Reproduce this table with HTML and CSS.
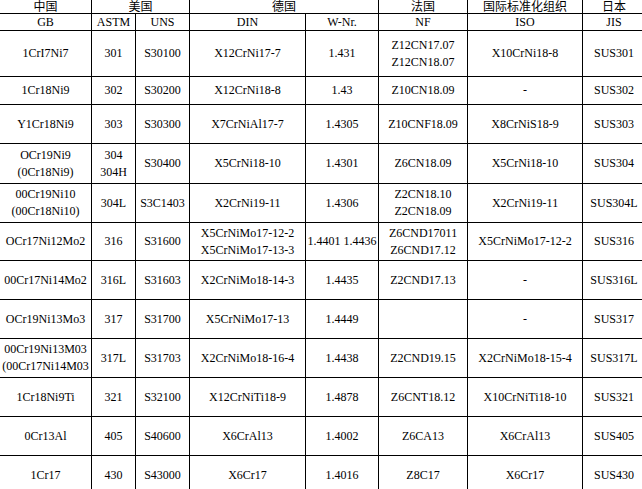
FILE: index.html
```html
<!DOCTYPE html>
<html>
<head>
<meta charset="utf-8">
<link rel="stylesheet" href="styles.css">
</head>
<body>
<div class="wrap">
<table class="grid">
  <colgroup>
    <col class="c-gb"><col class="c-astm"><col class="c-uns"><col class="c-din"><col class="c-wnr"><col class="c-nf"><col class="c-iso"><col class="c-jis">
  </colgroup>
  <tr class="h-country">
    <td class="cn">中国</td>
    <td class="cn" colspan="2">美国</td>
    <td class="cn" colspan="2">德国</td>
    <td class="cn">法国</td>
    <td class="cn">国际标准化组织</td>
    <td class="cn">日本</td>
  </tr>
  <tr class="h-std">
    <td>GB</td><td>ASTM</td><td>UNS</td><td>DIN</td><td>W-Nr.</td><td>NF</td><td>ISO</td><td>JIS</td>
  </tr>
  <tr class="r46">
    <td>1CrI7Ni7</td><td>301</td><td>S30100</td><td>X12CrNi17-7</td><td>1.431</td><td>Z12CN17.07<br>Z12CN18.07</td><td>X10CrNi18-8</td><td>SUS301</td>
  </tr>
  <tr class="r28">
    <td>1Cr18Ni9</td><td>302</td><td>S30200</td><td>X12CrNi18-8</td><td>1.43</td><td>Z10CN18.09</td><td>-</td><td>SUS302</td>
  </tr>
  <tr class="r39">
    <td>Y1Cr18Ni9</td><td>303</td><td>S30300</td><td>X7CrNiAl17-7</td><td>1.4305</td><td>Z10CNF18.09</td><td>X8CrNiS18-9</td><td>SUS303</td>
  </tr>
  <tr class="r40">
    <td>OCr19Ni9<br>(0Cr18Ni9)</td><td>304<br>304H</td><td>S30400</td><td>X5CrNi18-10</td><td>1.4301</td><td>Z6CN18.09</td><td>X5CrNi18-10</td><td>SUS304</td>
  </tr>
  <tr class="r39">
    <td>00Cr19Ni10<br>(00Cr18Ni10)</td><td>304L</td><td>S3C1403</td><td>X2CrNi19-11</td><td>1.4306</td><td>Z2CN18.10<br>Z2CN18.09</td><td>X2CrNi19-11</td><td>SUS304L</td>
  </tr>
  <tr class="r38">
    <td>OCr17Ni12Mo2</td><td>316</td><td>S31600</td><td>X5CrNiMo17-12-2<br>X5CrNiMo17-13-3</td><td>1.4401 1.4436</td><td>Z6CND17011<br>Z6CND17.12</td><td>X5CrNiMo17-12-2</td><td>SUS316</td>
  </tr>
  <tr class="r39">
    <td>00Cr17Ni14Mo2</td><td>316L</td><td>S31603</td><td>X2CrNiMo18-14-3</td><td>1.4435</td><td>Z2CND17.13</td><td>-</td><td>SUS316L</td>
  </tr>
  <tr class="r39">
    <td>OCr19Ni13Mo3</td><td>317</td><td>S31700</td><td>X5CrNiMo17-13</td><td>1.4449</td><td></td><td>-</td><td>SUS317</td>
  </tr>
  <tr class="r39">
    <td><div class="spill">00Cr19Ni13M03<br>(00Cr17Ni14M03</div></td><td>317L</td><td>S31703</td><td>X2CrNiMo18-16-4</td><td>1.4438</td><td>Z2CND19.15</td><td>X2CrNiMo18-15-4</td><td>SUS317L</td>
  </tr>
  <tr class="r39">
    <td>1Cr18Ni9Ti</td><td>321</td><td>S32100</td><td>X12CrNiTi18-9</td><td>1.4878</td><td>Z6CNT18.12</td><td>X10CrNiTi18-10</td><td>SUS321</td>
  </tr>
  <tr class="r39">
    <td>0Cr13Al</td><td>405</td><td>S40600</td><td>X6CrAl13</td><td>1.4002</td><td>Z6CA13</td><td>X6CrAl13</td><td>SUS405</td>
  </tr>
  <tr class="r39">
    <td>1Cr17</td><td>430</td><td>S43000</td><td>X6Cr17</td><td>1.4016</td><td>Z8C17</td><td>X6Cr17</td><td>SUS430</td>
  </tr>
</table>
</div>
</body>
</html>
```

FILE: styles.css
```css
html, body {
  margin: 0;
  padding: 0;
  background: #ffffff;
  overflow: hidden;
}

.wrap {
  width: 642px;
  height: 489px;
  overflow: hidden;
}

.grid {
  border-collapse: collapse;
  table-layout: fixed;
  width: 646px;
  margin-top: -3px;
  margin-left: -1px;
  font-family: "Liberation Serif", "Times New Roman", serif;
  font-size: 12px;
  line-height: 17px;
  color: #000000;
}

.grid td {
  border: 1px solid #000000;
  padding: 0;
  text-align: center;
  vertical-align: middle;
  white-space: nowrap;
}

.c-gb { width: 92px; }
.c-astm { width: 44px; }
.c-uns { width: 54px; }
.c-din { width: 116px; }
.c-wnr { width: 73px; }
.c-nf { width: 89px; }
.c-iso { width: 115px; }
.c-jis { width: 63px; }

.h-country { height: 16px; }
.h-country td.cn {
  font-family: "Noto Sans CJK SC", "Noto Sans", sans-serif;
  font-size: 12px;
  line-height: 12px;
  vertical-align: bottom;
  padding-bottom: 1px;
}

.h-std { height: 17px; }
.h-std td { line-height: 15px; }

.r46 { height: 46px; }
.r28 { height: 28px; }
.r38 { height: 38px; }
.r39 { height: 39px; }
.r40 { height: 40px; }

.spill {
  margin: 0 -6px;
  text-align: center;
}
```
